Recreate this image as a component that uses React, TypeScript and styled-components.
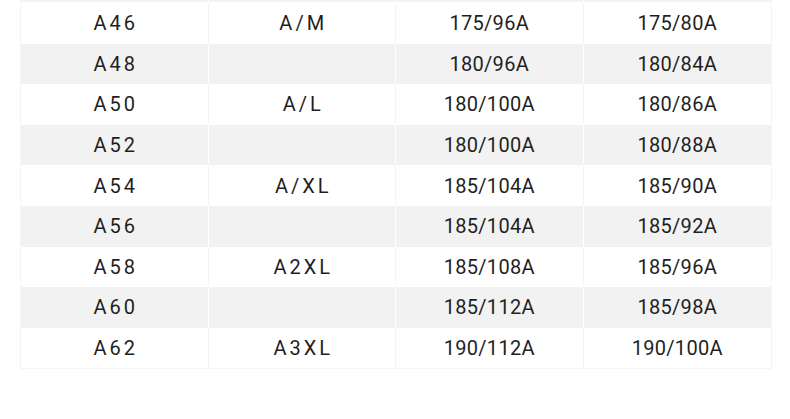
import { createGlobalStyle, styled } from 'styled-components';

const rows = [
  ['A46', 'A/M', '175/96A', '175/80A'],
  ['A48', '', '180/96A', '180/84A'],
  ['A50', 'A/L', '180/100A', '180/86A'],
  ['A52', '', '180/100A', '180/88A'],
  ['A54', 'A/XL', '185/104A', '185/90A'],
  ['A56', '', '185/104A', '185/92A'],
  ['A58', 'A2XL', '185/108A', '185/96A'],
  ['A60', '', '185/112A', '185/98A'],
  ['A62', 'A3XL', '190/112A', '190/100A'],
];

function App() {
  return (
    <>
      <GlobalStyle />
      <Page>
        <Table>
          {/* bottom edge of the row above, cut off by the crop */}
          <Row $shaded $cut>
            <Cell $shaded />
            <Cell $shaded />
            <Cell $shaded />
            <Cell $shaded />
          </Row>
          {rows.map((r, i) => (
            <Row key={r[0]} $shaded={i % 2 === 1}>
              <Cell $shaded={i % 2 === 1} $spaced>
                {r[0]}
              </Cell>
              <Cell $shaded={i % 2 === 1} $spaced>
                {r[1]}
              </Cell>
              <Cell $shaded={i % 2 === 1}>{r[2]}</Cell>
              <Cell $shaded={i % 2 === 1}>{r[3]}</Cell>
            </Row>
          ))}
        </Table>
      </Page>
    </>
  );
}

const GlobalStyle = createGlobalStyle`
  body {
    margin: 0;
    background: #ffffff;
    font-family: Roboto, 'Liberation Sans', sans-serif;
  }
`;
const Page = styled.div`
  width: 790px;
  height: 419px;
  padding: 0 20px;
  box-sizing: border-box;
  overflow: hidden;
`;
const Table = styled.div`
  display: flex;
  flex-direction: column;
  width: 750px;
  border: 1px solid #f5f5f5;
  border-top: none;
`;
const Row = styled.div<{ $shaded?: boolean; $cut?: boolean }>`
  display: grid;
  grid-template-columns: repeat(4, 1fr);
  height: ${(p) => (p.$cut ? '2px' : '40.6px')};
  margin-bottom: ${(p) => (p.$cut ? '1px' : '0')};
  background: ${(p) => (p.$shaded ? '#f2f2f2' : '#ffffff')};
`;
const Cell = styled.div<{ $shaded?: boolean; $spaced?: boolean }>`
  display: flex;
  align-items: center;
  justify-content: center;
  font-size: 20px;
  color: #1f1f1f;
  letter-spacing: ${(p) => (p.$spaced ? '3px' : '0.3px')};
  padding-left: ${(p) => (p.$spaced ? '3px' : '0')};
  border-right: 1px solid ${(p) => (p.$shaded ? '#ffffff' : '#f4f4f4')};
  &:last-child {
    border-right: none;
  }
`;

export default App;
